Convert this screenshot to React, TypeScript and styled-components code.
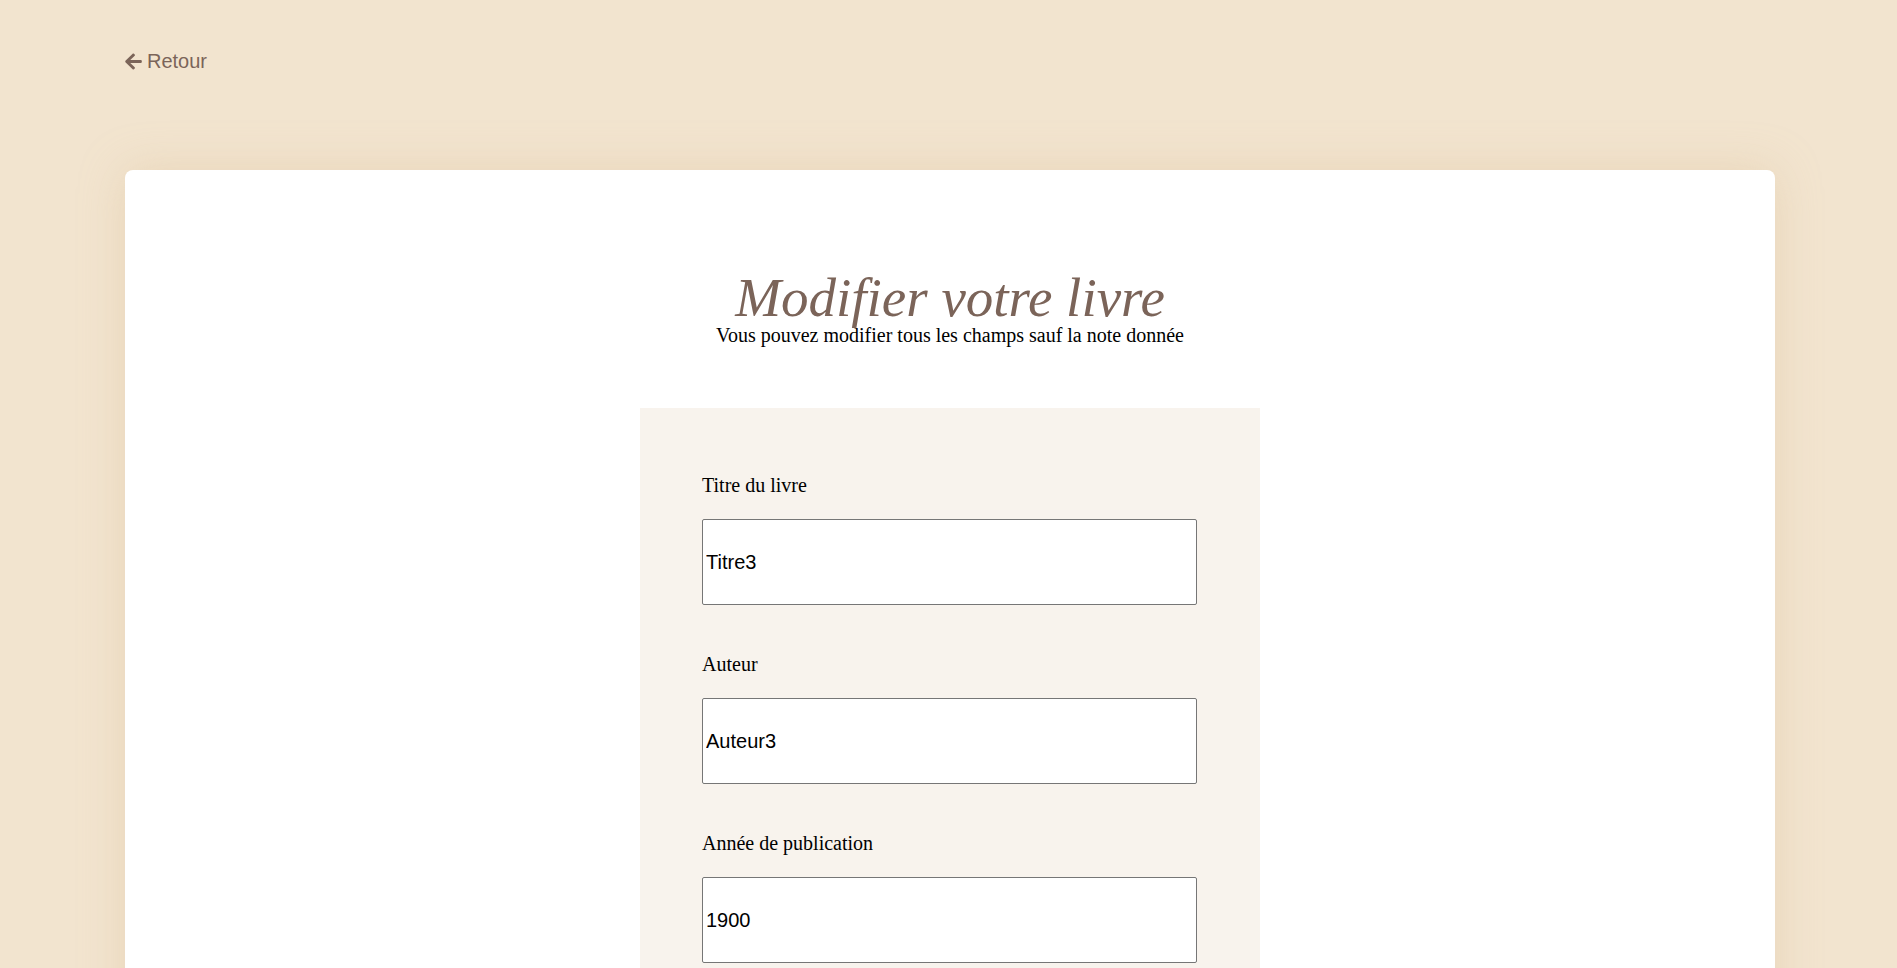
import React from "react";
import styled, { createGlobalStyle } from "styled-components";
import { FaArrowLeft } from "react-icons/fa";

const brown = "#7b6459";
const sand = "#f2e4cf";
const cream = "#f8f3ed";

const GlobalStyle = createGlobalStyle`
  html {
    scrollbar-width: none;
  }

  html::-webkit-scrollbar {
    display: none;
  }

  body {
    margin: 0;
    background-color: ${sand};
    font-family: "Liberation Serif", "Times New Roman", serif;
  }
`;

const Page = styled.div`
  padding: 50px 122px 80px 125px;
  min-height: 100vh;
  box-sizing: border-box;
`;

const BackLink = styled.a`
  display: inline-flex;
  align-items: center;
  gap: 5px;
  color: ${brown};
  font-family: "Liberation Sans", Arial, sans-serif;
  font-size: 20px;
  line-height: 23px;
  text-decoration: none;
  cursor: pointer;
  margin-bottom: 97px;

  svg {
    width: 17px;
    height: 19px;
  }
`;

const Card = styled.section`
  background-color: #fff;
  border-radius: 8px;
  box-shadow: 0 0 45px rgba(214, 182, 140, 0.35);
  padding: 102px 0 120px;
  display: flex;
  flex-direction: column;
  align-items: center;
`;

const Title = styled.h1`
  margin: 0;
  font-family: "Liberation Serif", "Times New Roman", serif;
  font-style: italic;
  font-weight: normal;
  font-size: 55px;
  line-height: 52px;
  color: ${brown};
`;

const Subtitle = styled.p`
  margin: 0 0 61px;
  font-size: 20px;
  line-height: 23px;
  color: #000;
`;

const FormPanel = styled.form`
  width: 620px;
  box-sizing: border-box;
  background-color: ${cream};
  padding: 66px 63px 70px 62px;
  display: flex;
  flex-direction: column;
  gap: 48px;
`;

const Field = styled.div`
  display: flex;
  flex-direction: column;
  gap: 22px;
`;

const Label = styled.label`
  font-size: 20px;
  line-height: 23px;
  color: #000;
`;

const Input = styled.input`
  height: 86px;
  box-sizing: border-box;
  border: 1px solid #767676;
  border-radius: 2px;
  background-color: #fff;
  padding: 0 3px;
  font-family: "Liberation Sans", Arial, sans-serif;
  font-size: 20px;
  color: #000;
  outline: none;
`;

const Submit = styled.button`
  align-self: center;
  padding: 14px 40px;
  background-color: ${brown};
  color: #fff;
  border: none;
  border-radius: 4px;
  font-family: "Liberation Serif", "Times New Roman", serif;
  font-size: 20px;
  cursor: pointer;
`;

const fields = [
  { id: "title", label: "Titre du livre", value: "Titre3" },
  { id: "author", label: "Auteur", value: "Auteur3" },
  { id: "year", label: "Année de publication", value: "1900" },
  { id: "genre", label: "Genre", value: "Roman" },
];

const App = () => (
  <>
    <GlobalStyle />
    <Page>
      <BackLink href="#">
        <FaArrowLeft />
        Retour
      </BackLink>
      <Card>
        <Title>Modifier votre livre</Title>
        <Subtitle>Vous pouvez modifier tous les champs sauf la note donnée</Subtitle>
        <FormPanel onSubmit={(e) => e.preventDefault()}>
          {fields.map((f) => (
            <Field key={f.id}>
              <Label htmlFor={f.id}>{f.label}</Label>
              <Input id={f.id} type="text" defaultValue={f.value} />
            </Field>
          ))}
          <Submit type="submit">Valider</Submit>
        </FormPanel>
      </Card>
    </Page>
  </>
);

export default App;
